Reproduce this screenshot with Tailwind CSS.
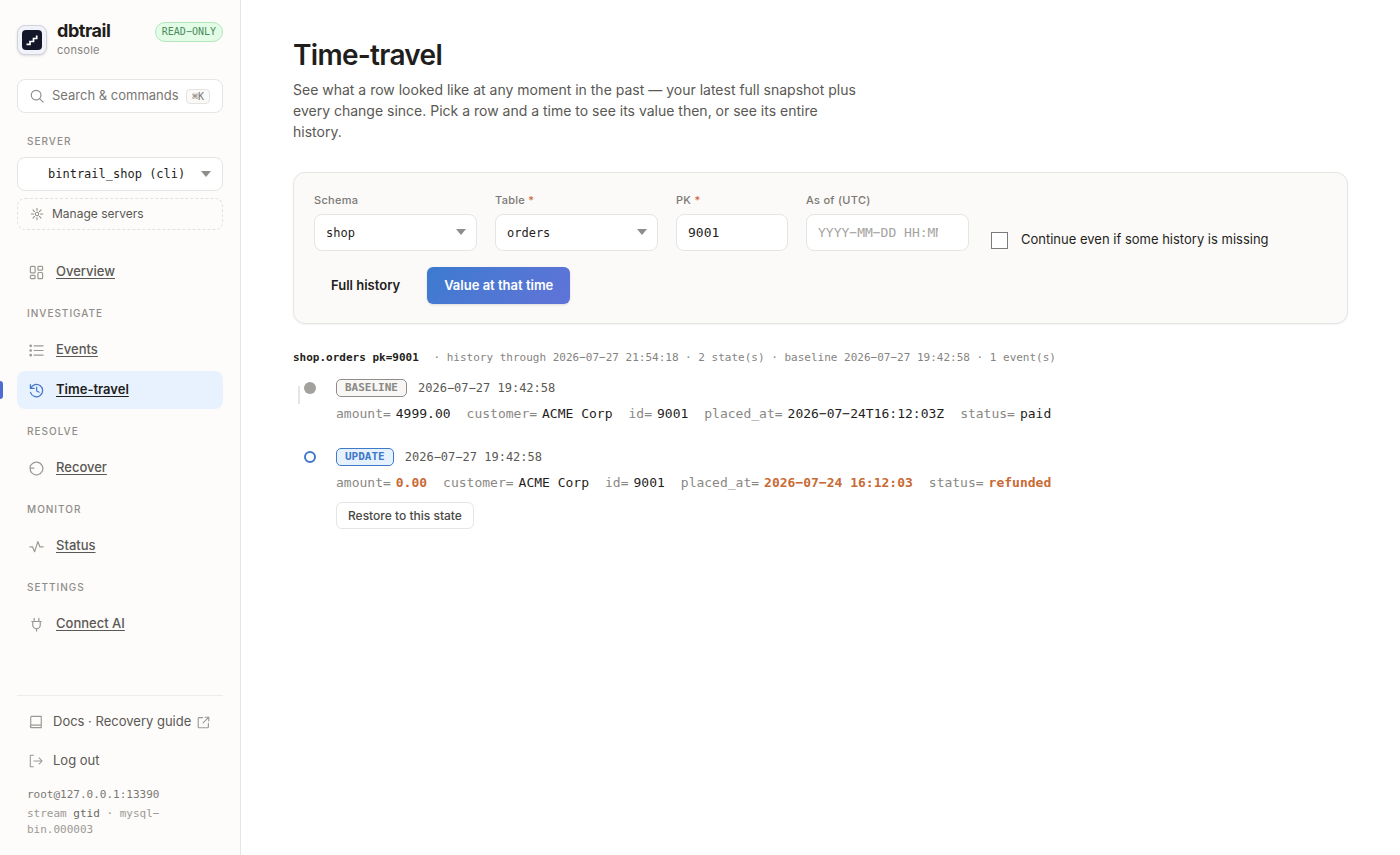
<!DOCTYPE html>
<html lang="en">
<head>
  <meta charset="UTF-8">
  <meta name="viewport" content="width=device-width, initial-scale=1.0">
  <title>dbtrail console - Time-travel</title>
  <script src="https://cdn.jsdelivr.net/npm/@tailwindcss/browser@4"></script>
</head>
<body class="min-h-screen flex bg-white font-['Inter',sans-serif] text-[#1f1e1c]">

  <!-- Sidebar -->
  <aside class="w-[241px] shrink-0 flex flex-col bg-[#fdfcfa] border-r border-[#e5e5e3] px-[17px] pt-5 pb-[17px]">
    <div class="flex items-start">
      <div class="mt-[5px] size-[30px] shrink-0 rounded-lg bg-[#f1f3f9] border border-[#cfd3de] shadow-sm flex items-center justify-center">
        <svg class="size-5" viewBox="0 0 20 20" fill="none">
          <rect width="20" height="20" rx="4" fill="#14162a"/>
          <path d="M4.500 14.300h3.500v-2.800h3.500V8.500h3.200V5.500" stroke="#fff" stroke-width="1.700"/>
        </svg>
      </div>
      <div class="ml-2.5 flex-1">
        <div class="text-lg leading-[22px] font-bold tracking-tight">dbtrail</div>
        <div class="text-[11px] leading-4 tracking-wide text-[#85837f]">console</div>
      </div>
      <span class="mt-0.5 h-5 px-[6px] rounded-full border border-[#b4e6bd] bg-[#e2fce6] font-['DejaVu_Sans_Mono',monospace] text-[10px] leading-[18px] text-[#4c8a5b]">READ−ONLY</span>
    </div>

    <button type="button" class="mt-[21px] h-[34px] shrink-0 flex items-center rounded-lg border border-[#e5e5e3] bg-white px-3 text-[13px] text-[#787672]">
      <svg class="size-[14px] mr-2" viewBox="0 0 16 16" fill="none" stroke="#8f8d89" stroke-width="1.300" stroke-linecap="round"><circle cx="7" cy="7" r="5.500"/><path d="M11 11l4 4"/></svg>
      <span class="whitespace-nowrap">Search &amp; commands</span>
      <kbd class="ml-auto h-[15px] px-[5px] rounded border border-[#e5e3df] bg-[#fbfaf8] font-['DejaVu_Sans_Mono',monospace] text-[10px] leading-[13px]">⌘K</kbd>
    </button>

    <label for="server" class="mt-5 ml-2.5 text-[10px] leading-4 font-medium tracking-widest text-[#8f8d89]">SERVER</label>
    <div class="relative mt-2">
      <select id="server" class="w-full h-[34px] appearance-none rounded-lg border border-[#e5e5e3] bg-white pl-[30px] pr-7 font-['DejaVu_Sans_Mono',monospace] text-xs">
        <option>bintrail_shop (cli)</option>
      </select>
      <svg class="absolute right-3 top-[14px] w-[10px] h-[6px] pointer-events-none" viewBox="0 0 10 6" fill="#8f8d89"><path d="M0 0h10L5 6z"/></svg>
    </div>
    <button type="button" class="mt-[7px] h-8 shrink-0 flex items-center gap-2 rounded-lg border border-dashed border-[#e3e1dd] px-3 text-xs text-[#5a5854]">
      <svg class="size-[14px]" viewBox="0 0 16 16" fill="none" stroke="#8f8d89" stroke-width="1.200" stroke-linecap="round"><circle cx="8" cy="8" r="2"/><path d="M8 1.500v2.500M8 12v2.500M1.500 8H4M12 8h2.500M3.400 3.400l1.800 1.800M10.800 10.800l1.800 1.800M3.400 12.600l1.800-1.800M10.800 5.200l1.800-1.800"/></svg>
      Manage servers
    </button>

    <nav class="mt-[23px] flex flex-col text-[13px] font-medium text-[#5a5854]">
      <a href="#" class="h-[38px] flex items-center gap-3 px-3 underline underline-offset-2">
        <svg class="size-[15px]" viewBox="0 0 16 16" fill="none" stroke="#9b9995" stroke-width="1.300"><rect x="1.500" y="1.500" width="5" height="7" rx="1"/><rect x="9.500" y="1.500" width="5" height="4" rx="1"/><rect x="1.500" y="11" width="5" height="3.500" rx="1"/><rect x="9.500" y="8" width="5" height="6.500" rx="1"/></svg>
        Overview
      </a>
      <div class="mt-[14px] mb-2.5 ml-2.5 text-[10px] leading-4 tracking-widest text-[#8f8d89]">INVESTIGATE</div>
      <a href="#" class="h-[38px] flex items-center gap-3 px-3 underline underline-offset-2">
        <svg class="size-[15px]" viewBox="0 0 16 16" fill="none" stroke="#9b9995" stroke-width="1.300" stroke-linecap="round"><path d="M5.500 3h9.500M5.500 8h9.500M5.500 13h9.500"/><circle cx="1.800" cy="3" r=".8"/><circle cx="1.800" cy="8" r=".8"/><circle cx="1.800" cy="13" r=".8"/></svg>
        Events
      </a>
      <a href="#" aria-current="page" class="relative mt-0.5 h-[38px] flex items-center gap-3 px-3 rounded-lg bg-[#e8f2fe] font-semibold text-[#1f1e1c] underline underline-offset-2">
        <span class="absolute -left-[17px] top-[10px] w-[3px] h-[18px] rounded-r bg-[#4d6bd2]"></span>
        <svg class="size-[15px]" viewBox="0 0 16 16" fill="none" stroke="#4377c9" stroke-width="1.300" stroke-linecap="round" stroke-linejoin="round"><path d="M1.500 1.800v4h4M1.800 5.600A6.600 6.600 0 1 1 1.600 10M8.200 4.500v4l2.600 1.300"/></svg>
        Time-travel
      </a>
      <div class="mt-[14px] mb-2.5 ml-2.5 text-[10px] leading-4 tracking-widest text-[#8f8d89]">RESOLVE</div>
      <a href="#" class="h-[38px] flex items-center gap-3 px-3 underline underline-offset-2">
        <svg class="size-[15px]" viewBox="0 0 16 16" fill="none" stroke="#9b9995" stroke-width="1.300" stroke-linecap="round" stroke-linejoin="round"><path d="M1.200 7.500A6.800 6.800 0 1 0 3 3.400L1.200 5.500v2h4"/></svg>
        Recover
      </a>
      <div class="mt-[14px] mb-2.5 ml-2.5 text-[10px] leading-4 tracking-widest text-[#8f8d89]">MONITOR</div>
      <a href="#" class="h-[38px] flex items-center gap-3 px-3 underline underline-offset-2">
        <svg class="size-[15px]" viewBox="0 0 16 16" fill="none" stroke="#9b9995" stroke-width="1.300" stroke-linecap="round" stroke-linejoin="round"><path d="M1 8.500h2.800L6 13.500 9.500 2.800l2.200 5.700H15"/></svg>
        Status
      </a>
      <div class="mt-[14px] mb-2.5 ml-2.5 text-[10px] leading-4 tracking-widest text-[#8f8d89]">SETTINGS</div>
      <a href="#" class="h-[38px] flex items-center gap-3 px-3 underline underline-offset-2">
        <svg class="size-[15px]" viewBox="0 0 16 16" fill="none" stroke="#9b9995" stroke-width="1.300" stroke-linecap="round" stroke-linejoin="round"><path d="M5.500 1.500v3M10.500 1.500v3M3 4.800h10M4 4.800v3.700a4 4 0 0 0 8 0V4.800M8 12.500V15"/></svg>
        Connect AI
      </a>
    </nav>

    <div class="mt-auto border-t border-[#eeece8] pt-[7px] text-[13px] text-[#5a5854]">
      <a href="#" class="h-[38px] flex items-center gap-2.5 px-3">
        <svg class="size-[14px] shrink-0" viewBox="0 0 16 16" fill="none" stroke="#9b9995" stroke-width="1.300" stroke-linejoin="round"><path d="M2 14V2.500a1 1 0 0 1 1-1h11v13H3a1.200 1.200 0 0 1 0-3h11"/></svg>
        <span class="whitespace-nowrap">Docs · Recovery guide</span>
        <svg class="-ml-1 size-[13px] shrink-0" viewBox="0 0 16 16" fill="none" stroke="#9b9995" stroke-width="1.400" stroke-linecap="round" stroke-linejoin="round"><path d="M7 2H2.500a1 1 0 0 0-1 1v10.500a1 1 0 0 0 1 1H13a1 1 0 0 0 1-1V9M10 1.500h4.500V6M14.500 1.500L7.500 8.500"/></svg>
      </a>
      <button type="button" class="mt-px h-[38px] w-full flex items-center gap-2.5 px-3">
        <svg class="size-[14px]" viewBox="0 0 16 16" fill="none" stroke="#9b9995" stroke-width="1.200" stroke-linecap="round" stroke-linejoin="round"><path d="M5 1.500H1.500v13H5M5.500 8H15M11.500 4.500L15 8l-3.500 3.500"/></svg>
        Log out
      </button>
    </div>
    <div class="mt-[7px] ml-2.5 w-[150px] font-['DejaVu_Sans_Mono',monospace] text-[11px] leading-4 text-[#9b9995]">
      <div class="mb-[3px] text-[#7a7874]">root@127.0.0.1:13390</div>
      <div>stream <span class="text-[#6a6864]">gtid</span> · mysql−<br>bin.000003</div>
    </div>
  </aside>

  <!-- Main -->
  <main class="flex-1 min-w-0 px-[52px] pt-9">
    <h1 class="text-[28px] leading-[38px] font-semibold tracking-tight">Time-travel</h1>
    <p class="mt-[5px] max-w-[570px] text-sm leading-[21px] text-[#5a5854]">See what a row looked like at any moment in the past — your latest full snapshot plus every change since. Pick a row and a time to see its value then, or see its entire history.</p>

    <form class="mt-[30px] rounded-xl border border-[#e5e5e3] bg-[#fbfaf9] shadow-xs px-5 py-[19px] flex flex-wrap items-start gap-x-[18px] gap-y-4">
      <div class="w-[163px]">
        <label for="schema" class="block text-[11px] leading-4 font-medium tracking-wide text-[#7a7874]">Schema</label>
        <div class="relative mt-1.5">
          <select id="schema" class="w-full h-[37px] appearance-none rounded-lg border border-[#e5e5e3] bg-white px-[11px] font-['DejaVu_Sans_Mono',monospace] text-xs">
            <option>shop</option>
          </select>
          <svg class="absolute right-[11px] top-[15px] w-[10px] h-[6px] pointer-events-none" viewBox="0 0 10 6" fill="#8f8d89"><path d="M0 0h10L5 6z"/></svg>
        </div>
      </div>
      <div class="w-[163px]">
        <label for="table" class="block text-[11px] leading-4 font-medium tracking-wide text-[#7a7874]">Table <span class="text-[#d0603a]">*</span></label>
        <div class="relative mt-1.5">
          <select id="table" class="w-full h-[37px] appearance-none rounded-lg border border-[#e5e5e3] bg-white px-[11px] font-['DejaVu_Sans_Mono',monospace] text-xs">
            <option>orders</option>
          </select>
          <svg class="absolute right-[11px] top-[15px] w-[10px] h-[6px] pointer-events-none" viewBox="0 0 10 6" fill="#8f8d89"><path d="M0 0h10L5 6z"/></svg>
        </div>
      </div>
      <div class="w-[112px]">
        <label for="pk" class="block text-[11px] leading-4 font-medium tracking-wide text-[#7a7874]">PK <span class="text-[#d0603a]">*</span></label>
        <input id="pk" type="text" value="9001" class="mt-1.5 w-full h-[37px] rounded-lg border border-[#e5e5e3] bg-white px-[11px] font-['DejaVu_Sans_Mono',monospace] text-[13px]">
      </div>
      <div class="w-[163px]">
        <label for="asof" class="block text-[11px] leading-4 font-medium tracking-wide text-[#7a7874]">As of (UTC)</label>
        <input id="asof" type="text" placeholder="YYYY−MM−DD HH:MM:SS" class="mt-1.5 w-full h-[37px] rounded-lg border border-[#e5e5e3] bg-white pl-[11px] pr-[30px] font-['DejaVu_Sans_Mono',monospace] text-[13px] placeholder:text-[#a5a39f]">
      </div>
      <label class="mt-[38px] ml-1 h-5 flex items-center gap-[13px] text-[13px]">
        <input type="checkbox" class="size-[17px] appearance-none border border-[#7c7b79] bg-white checked:bg-[#4377c9]">
        Continue even if some history is missing
      </label>
      <div class="basis-full flex gap-2.5 text-[13px] font-semibold">
        <button type="button" class="h-[37px] px-[17px]">Full history</button>
        <button type="submit" class="h-[37px] px-[17px] rounded-md bg-linear-135 from-[#3b7bcf] to-[#6073d8] text-white shadow-sm">Value at that time</button>
      </div>
    </form>

    <!-- Row history -->
    <section class="mt-[26px] font-['DejaVu_Sans_Mono',monospace]">
      <div class="text-[11px] leading-4 text-[#85837f]"><strong class="mr-2 text-[#1f1e1c]">shop.orders pk=9001</strong> · history through 2026−07−27 21:54:18 · 2 state(s) · baseline 2026−07−27 19:42:58 · 1 event(s)</div>

      <ol class="mt-3">
        <li class="flex">
          <div class="w-[43px] shrink-0 flex items-start pl-[5px]">
            <span class="mt-2 w-0.5 h-[18px] bg-[#e5e5e3]"></span>
            <span class="mt-1 ml-1 size-3 rounded-full bg-[#a3a19d]"></span>
          </div>
          <div class="pb-[23px]">
            <div class="flex items-center gap-[11px] h-5 text-xs text-[#5a5854]">
              <span class="h-[18px] px-2 rounded-[5px] border border-[#8f8d89] bg-[#f8f7f5] text-[11px] leading-4 font-bold text-[#8a8884]">BASELINE</span>
              2026−07−27 19:42:58
            </div>
            <div class="mt-1.5 flex flex-wrap gap-x-4 text-[13px] leading-5">
              <span class="flex gap-[5px]"><span class="text-[#8a8884]">amount=</span>4999.00</span>
              <span class="flex gap-[5px]"><span class="text-[#8a8884]">customer=</span>ACME Corp</span>
              <span class="flex gap-[5px]"><span class="text-[#8a8884]">id=</span>9001</span>
              <span class="flex gap-[5px]"><span class="text-[#8a8884]">placed_at=</span>2026−07−24T16:12:03Z</span>
              <span class="flex gap-[5px]"><span class="text-[#8a8884]">status=</span>paid</span>
            </div>
          </div>
        </li>
        <li class="flex">
          <div class="w-[43px] shrink-0 flex items-start pl-[11px]">
            <span class="mt-1 size-3 rounded-full border-2 border-[#3f79c9] bg-white"></span>
          </div>
          <div>
            <div class="flex items-center gap-[11px] h-5 text-xs text-[#5a5854]">
              <span class="h-[18px] px-2 rounded-[5px] border border-[#3f79c9] bg-[#e6f1fe] text-[11px] leading-4 font-bold text-[#3f79c9]">UPDATE</span>
              2026−07−27 19:42:58
            </div>
            <div class="mt-1.5 flex flex-wrap gap-x-4 text-[13px] leading-5">
              <span class="flex gap-[5px]"><span class="text-[#8a8884]">amount=</span><strong class="text-[#c96a35]">0.00</strong></span>
              <span class="flex gap-[5px]"><span class="text-[#8a8884]">customer=</span>ACME Corp</span>
              <span class="flex gap-[5px]"><span class="text-[#8a8884]">id=</span>9001</span>
              <span class="flex gap-[5px]"><span class="text-[#8a8884]">placed_at=</span><strong class="text-[#c96a35]">2026−07−24 16:12:03</strong></span>
              <span class="flex gap-[5px]"><span class="text-[#8a8884]">status=</span><strong class="text-[#c96a35]">refunded</strong></span>
            </div>
            <button type="button" class="mt-[9px] h-[27px] px-[11px] rounded-md border border-[#e5e5e3] bg-white font-['Inter',sans-serif] text-xs font-medium text-[#4a4845]">Restore to this state</button>
          </div>
        </li>
      </ol>
    </section>
  </main>

</body>
</html>
